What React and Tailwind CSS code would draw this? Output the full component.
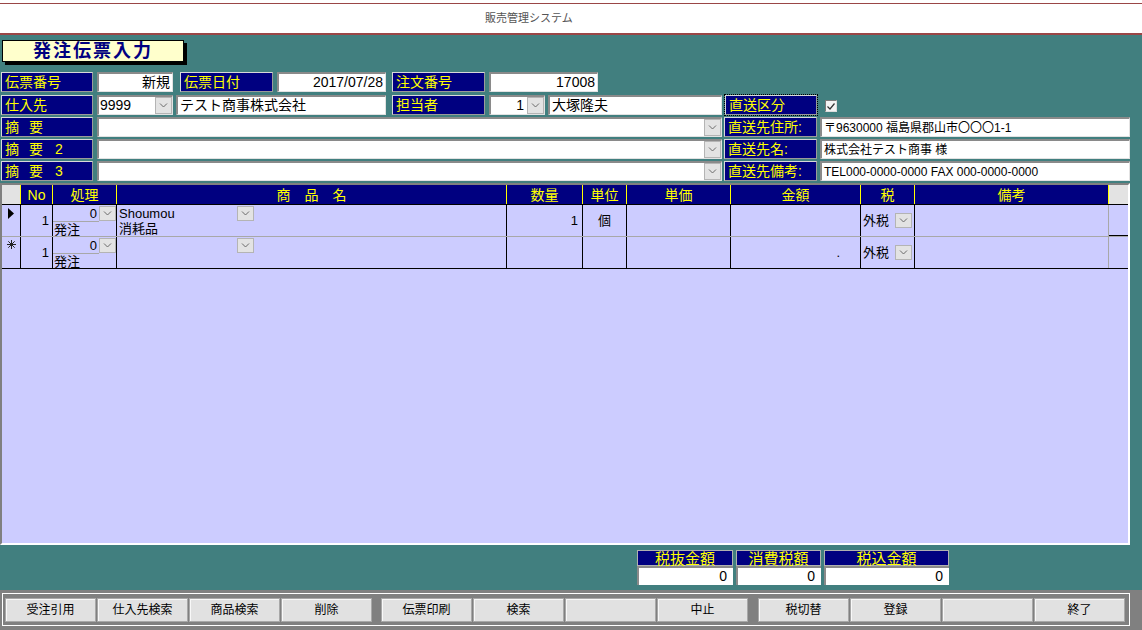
import React from 'react'

const FONT = "font-['Liberation_Sans','Noto_Sans_CJK_JP',sans-serif]"

function Chevron() {
  return (
    <svg width="9" height="5" viewBox="0 0 9 5">
      <path d="M1 0.5 L4.5 4 L8 0.5" fill="none" stroke="#6a6a6a" strokeWidth="1" />
    </svg>
  )
}

function DropBtn({ className = '' }) {
  return (
    <div className={`w-[17px] shrink-0 bg-[#e3e3e3] border border-[#b4b4b4] flex items-center justify-center ${className}`}>
      <Chevron />
    </div>
  )
}

function Label({ w, children, focus }) {
  return (
    <div className={`${w} h-full shrink-0 ${focus ? 'outline outline-1 outline-dotted outline-black' : ''}`}>
      <div className="h-full bg-[#000080] text-[#ffff00] text-[14px] leading-none flex items-center pl-[3px] border border-t-[#d8d8d8] border-l-[#d8d8d8] border-b-[#9a9a9a] border-r-[#9a9a9a] whitespace-pre">
        {children}
      </div>
    </div>
  )
}

function Field({ w, children, right, size = 'text-[14px]' }) {
  return (
    <div className={`${w} h-full shrink-0 bg-white border-t-2 border-l-2 border-b border-r border-t-[#8a8a8a] border-l-[#8a8a8a] border-b-[#e2e2e2] border-r-[#e2e2e2] flex items-center px-[2px] text-black ${size} ${right ? 'justify-end' : ''} whitespace-pre`}>
      {children}
    </div>
  )
}

function Combo({ w, children, right }) {
  return (
    <div className={`${w} h-full shrink-0 bg-white border-t-2 border-l-2 border-b border-r border-t-[#8a8a8a] border-l-[#8a8a8a] border-b-[#e2e2e2] border-r-[#e2e2e2] flex text-black text-[14px]`}>
      <div className={`flex-1 flex items-center px-[1px] ${right ? 'justify-end pr-[3px]' : ''}`}>{children}</div>
      <DropBtn className="h-full" />
    </div>
  )
}

function GridRow({ first }) {
  return (
    <div className={`h-[32px] flex border-b text-[13px] text-black ${first ? 'border-[#a8a8a8]' : 'border-black'}`}>
      <div className="w-[19px] border-r border-black flex justify-center pt-[3px]">
        {first ? (
          <svg width="6" height="11" viewBox="0 0 6 11"><path d="M0 0 L6 5.5 L0 11 Z" fill="#000" /></svg>
        ) : (
          <svg width="9" height="9" viewBox="0 0 9 9" stroke="#222" strokeWidth="1">
            <path d="M4.5 0 V9 M0 4.5 H9 M1.3 1.3 L7.7 7.7 M7.7 1.3 L1.3 7.7" />
          </svg>
        )}
      </div>
      <div className="w-[32px] border-r border-black flex items-center justify-end pr-[3px]">1</div>
      <div className="w-[64px] border-r border-black flex flex-col pt-[1px]">
        <div className="h-[16px] flex">
          <div className="flex-1 text-right pr-[2px] border-b border-[#a8a8a8] leading-[15px]">0</div>
          <DropBtn className="h-[15px]" />
        </div>
        <div className="pl-[1px] leading-[15px]">発注</div>
      </div>
      <div className="w-[390px] border-r border-black flex flex-col pt-[1px]">
        <div className="h-[15px] flex">
          <div className="w-[120px] pl-[2px] leading-[15px]">{first ? 'Shoumou' : ''}</div>
          <DropBtn className="h-[15px]" />
        </div>
        <div className="pl-[2px] leading-[16px]">{first ? '消耗品' : ''}</div>
      </div>
      <div className="w-[76px] border-r border-black flex items-center justify-end pr-[4px]">{first ? '1' : ''}</div>
      <div className="w-[44px] border-r border-black flex items-center justify-center">{first ? '個' : ''}</div>
      <div className="w-[104px] border-r border-black" />
      <div className="w-[130px] border-r border-black flex items-center justify-end pr-[20px]">{first ? '' : '.'}</div>
      <div className="w-[54px] border-r border-black flex items-center pl-[2px]">
        <div className="w-[32px]">外税</div>
        <DropBtn className="h-[15px]" />
      </div>
      <div className="w-[194px] border-r border-[#a8a8a8]" />
      <div className={`flex-1 ${first ? 'border-b border-black' : ''}`} />
    </div>
  )
}

const headers = [
  { w: 'w-[32px]', t: 'No' },
  { w: 'w-[64px]', t: '処理' },
  { w: 'w-[390px]', t: '商　品　名' },
  { w: 'w-[76px]', t: '数量' },
  { w: 'w-[44px]', t: '単位' },
  { w: 'w-[104px]', t: '単価' },
  { w: 'w-[130px]', t: '金額' },
  { w: 'w-[54px]', t: '税' },
  { w: 'w-[194px]', t: '備考' },
]

const buttons = [
  ['受注引用', '仕入先検索', '商品検索', '削除'],
  ['伝票印刷', '検索', '', '中止'],
  ['税切替', '登録', '', '終了'],
]

export default function App() {
  return (
    <div className={`w-[1142px] h-[630px] overflow-hidden flex flex-col bg-[#417f7f] ${FONT}`}>

      {/* タイトルバー */}
      <div className="bg-white pt-[3px]">
        <div className="h-[32px] border-t border-b-2 border-[#9a4646] flex items-center pl-[485px] text-[11px] text-[#555]">
          販売管理システム
        </div>
      </div>

      {/* 見出し */}
      <div className="ml-[2px] mt-[5px] w-[182px] h-[22px] bg-[#ffffcc] border border-black shadow-[3px_3px_0_#000] flex items-center justify-center text-[#000080] text-[18px] font-bold tracking-[2px] leading-none">
        発注伝票入力
      </div>

      {/* ヘッダ入力 */}
      <div className="mt-[10px] flex flex-col">
        <div className="h-[20px] flex ml-[1px]">
          <Label w="w-[92px]">伝票番号</Label>
          <div className="ml-[4px]" />
          <Field w="w-[76px]" right>新規</Field>
          <div className="ml-[7px]" />
          <Label w="w-[93px]">伝票日付</Label>
          <div className="ml-[4px]" />
          <Field w="w-[109px]" right>2017/07/28</Field>
          <div className="ml-[6px]" />
          <Label w="w-[93px]">注文番号</Label>
          <div className="ml-[4px]" />
          <Field w="w-[109px]" right>17008</Field>
        </div>

        <div className="h-[20px] flex ml-[1px] mt-[3px]">
          <Label w="w-[92px]">仕入先</Label>
          <div className="ml-[4px]" />
          <Combo w="w-[76px]">9999</Combo>
          <div className="ml-[3px]" />
          <Field w="w-[210px]">テスト商事株式会社</Field>
          <div className="ml-[6px]" />
          <Label w="w-[93px]">担当者</Label>
          <div className="ml-[4px]" />
          <Combo w="w-[56px]" right>1</Combo>
          <div className="ml-[3px]" />
          <Field w="w-[174px]">大塚隆夫</Field>
          <div className="ml-[3px]" />
          <Label w="w-[92px]" focus>直送区分</Label>
          <div className="ml-[8px] self-center mt-[2px] w-[12px] h-[12px] bg-[#f4f4f4] border border-t-[#7a7a7a] border-l-[#7a7a7a] border-b-[#dcdcdc] border-r-[#dcdcdc] flex items-center justify-center">
            <svg width="8" height="7" viewBox="0 0 8 7"><path d="M0.5 3.5 L3 6 L7.5 0.5" fill="none" stroke="#333" strokeWidth="1.2" /></svg>
          </div>
        </div>

        {[
          ['', '直送先住所:', '〒9630000 福島県郡山市〇〇〇1-1'],
          ['2', '直送先名:', '株式会社テスト商事 様'],
          ['3', '直送先備考:', 'TEL000-0000-0000 FAX 000-0000-0000'],
        ].map(([n, r, v]) => (
          <div key={r} className="h-[20px] flex ml-[1px] mt-[2px]">
            <Label w="w-[92px]">
              <span>摘</span>
              <span className="ml-[10px]">要</span>
              {n && <span className="ml-[12px]">{n}</span>}
            </Label>
            <div className="ml-[4px]" />
            <Combo w="w-[625px]" />
            <div className="ml-[2px]" />
            <Label w="w-[93px]">{r}</Label>
            <div className="ml-[3px]" />
            <Field w="w-[310px]" size="text-[12px]">{v}</Field>
          </div>
        ))}
      </div>

      {/* 明細 */}
      <div className="mt-[2px] w-[1130px] h-[362px] shrink-0 border-2 border-t-[#808080] border-l-[#808080] border-b-white border-r-white bg-[#ccccff] flex flex-col">
        <div className="h-[20px] flex bg-[#000080] border-b border-black text-[#ffff00] text-[14px] leading-none">
          <div className="w-[19px] bg-[#e3e3e3] border-r border-[#ffff00]" />
          {headers.map(h => (
            <div key={h.t} className={`${h.w} border-r border-[#ffff00] flex items-center justify-center`}>{h.t}</div>
          ))}
          <div className="flex-1 bg-[#e3e3e3]" />
        </div>
        <GridRow first />
        <GridRow />
        <div className="flex-1" />
      </div>

      {/* 合計 */}
      <div className="mt-[5px] ml-[637px] flex gap-[3px] text-black">
        {[
          ['w-[96px]', '税抜金額'],
          ['w-[85px]', '消費税額'],
          ['w-[125px]', '税込金額'],
        ].map(([w, t]) => (
          <div key={t} className={`${w} flex flex-col`}>
            <div className="h-[16px] bg-[#000080] text-[#ffff00] text-[15px] leading-none flex items-center justify-center border border-[#b0b0b0]">{t}</div>
            <div className="h-[19px] bg-white border-t-2 border-l-2 border-t-[#8a8a8a] border-l-[#8a8a8a] flex items-center justify-end pr-[6px] text-[14px]">0</div>
          </div>
        ))}
      </div>

      {/* ボタン */}
      <div className="mt-[5px] flex-1 bg-[#808080] pt-[3px]">
        <div className="ml-[2px] w-[1128px] border border-white pt-[4px] pb-[3px] pl-[2px] flex">
          {buttons.map((g, gi) => (
            <div key={gi} className={`flex gap-[1px] ${gi === 1 ? 'ml-[9px]' : ''} ${gi === 2 ? 'ml-[10px]' : ''}`}>
              {g.map((b, bi) => (
                <div key={bi} className="w-[91px] h-[24px] bg-[#e1e1e1] border border-[#a8a8a8] shadow-[inset_1px_1px_0_#f8f8f8] flex items-center justify-center text-[12px] text-black">
                  {b}
                </div>
              ))}
            </div>
          ))}
        </div>
      </div>
    </div>
  )
}
